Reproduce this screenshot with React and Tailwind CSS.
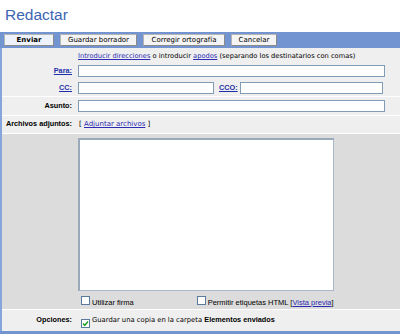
import React from 'react';

const verdana = { fontFamily: '"DejaVu Sans", Verdana, sans-serif' };

function Checkbox({ checked }) {
  return (
    <span className="inline-flex w-[9px] h-[9px] shrink-0 items-center justify-center border border-[#5a7a9c] bg-white">
      {checked && (
        <svg width="7" height="7" viewBox="0 0 7 7">
          <path d="M1 3.5 L2.8 5.3 L6 1.5" fill="none" stroke="#21a121" strokeWidth="1.5" />
        </svg>
      )}
    </span>
  );
}

function Btn({ children, w, first }) {
  return (
    <button
      className={
        'h-[12px] flex items-center justify-center text-[7px] text-black border border-[#b5b5b5] border-r-[#8a8a8a] border-b-[#8a8a8a] ' +
        (first ? 'bg-[#eef3fb] font-bold' : 'bg-[#f4f4f4]')
      }
      style={{ ...verdana, width: w }}
    >
      {children}
    </button>
  );
}

const label = 'font-["Liberation_Sans",Arial,sans-serif] font-bold text-[7.3px]';
const link = label + ' text-[#1e2fa8] underline';
const input = 'h-[12px] bg-white border border-[#7f9db9]';

export default function App() {
  return (
    <div className="w-[400px] h-[334px] bg-white overflow-hidden">
      <h1 className="h-[32px] pl-[5px] pt-[7px] text-[15.5px] leading-none text-[#3c65b4] font-['Liberation_Sans',Arial,sans-serif]">
        Redactar
      </h1>

      <div className="h-[16px] bg-[#7294d1] flex items-center pl-[4px] gap-[6px]">
        <Btn w={50} first>Enviar</Btn>
        <Btn w={77}>Guardar borrador</Btn>
        <Btn w={82}>Corregir ortografía</Btn>
        <Btn w={46}>Cancelar</Btn>
      </div>

      <div className="border-l-[2px] border-[#85a5dc] bg-white">
        <div className="h-[48px] bg-[#efefef] pt-[3px]">
          <div className="h-[10px] leading-[10px] pl-[76px] text-[6.7px] text-black" style={verdana}>
            <a className="text-[#2b2bb3] underline">Introducir direcciones</a> o introducir{' '}
            <a className="text-[#2b2bb3] underline">apodos</a> (separando los destinatarios con comas)
          </div>
          <div className="mt-[4px] flex items-center">
            <span className={link + ' w-[70px] text-right'}>Para:</span>
            <div className={input + ' ml-[6px] w-[307px]'} />
          </div>
          <div className="mt-[5px] flex items-center">
            <span className={link + ' w-[70px] text-right'}>CC:</span>
            <div className={input + ' ml-[6px] w-[136px]'} />
            <span className={link + ' ml-[5px]'}>CCO:</span>
            <div className={input + ' ml-[2px] w-[143px]'} />
          </div>
        </div>
        <div className="h-[1px] bg-white" />

        <div className="h-[18px] bg-[#efefef] pt-[3px] flex items-start">
          <span className={label + ' text-black w-[70px] text-right leading-[12px]'}>Asunto:</span>
          <div className={input + ' ml-[6px] w-[307px]'} />
        </div>
        <div className="h-[1px] bg-white" />

        <div className="h-[17px] bg-[#efefef] flex items-center">
          <span className={label + ' text-black w-[70px] text-right'}>Archivos adjuntos:</span>
          <span className="ml-[7px] text-[7px] text-black" style={verdana}>
            [ <a className="text-[#2b2bb3] underline">Adjuntar archivos</a> ]
          </span>
        </div>
        <div className="h-[1px] bg-white" />

        <div className="h-[175px] bg-[#dcdcdc] pt-[4px] pl-[76px]">
          <div className="w-[256px] h-[153px] bg-white border border-[#a9b8c8] border-t-[2px] border-l-[2px] border-t-[#9aaabb] border-l-[#9aaabb]" />
          <div className="mt-[5px] flex items-center font-['Liberation_Sans',Arial,sans-serif] font-normal text-[7.5px] text-black">
            <span className="ml-[3px]"><Checkbox /></span>
            <span className="ml-[2px]">Utilizar firma</span>
            <span className="ml-[63px]"><Checkbox /></span>
            <span className="ml-[2px]">
              Permitir etiquetas HTML [<a className="text-[#2b2bb3] underline">Vista previa</a>]
            </span>
          </div>
        </div>
        <div className="h-[1px] bg-white" />

        <div className="h-[21px] bg-[#efefef] flex items-center">
          <span className={label + ' text-black w-[70px] text-right'}>Opciones:</span>
          <span className="ml-[9px]"><Checkbox checked /></span>
          <span className="ml-[2px] text-[6.8px] text-black" style={verdana}>
            Guardar una copia en la carpeta <b className={label + ' text-black'}>Elementos enviados</b>
          </span>
        </div>
      </div>
      <div className="h-[3px] bg-[#7294d1]" />
    </div>
  );
}
